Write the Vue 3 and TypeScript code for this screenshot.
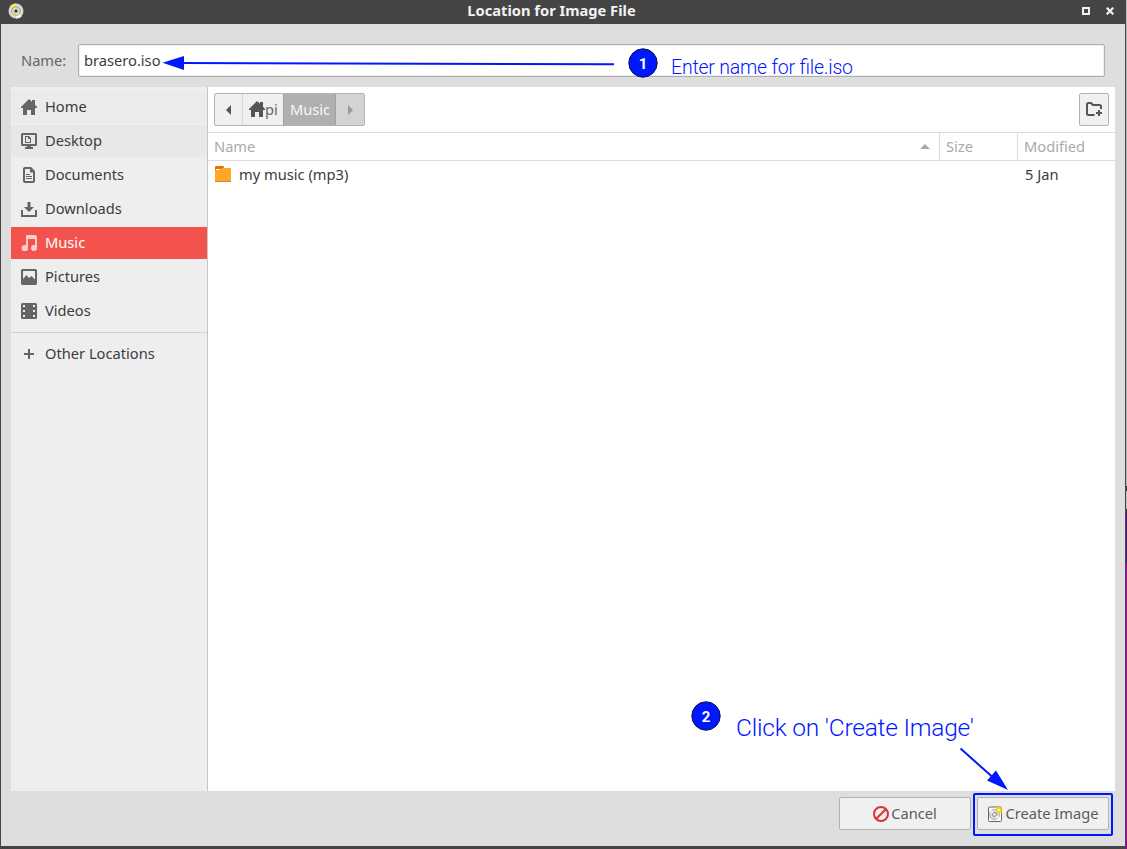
<script setup lang="ts">
interface Place {
  label: string
  icon: string
  state?: string
}

const places: Place[] = [
  { label: 'Home', icon: 'home', state: 'fade' },
  { label: 'Desktop', icon: 'desktop', state: 'hover' },
  { label: 'Documents', icon: 'documents' },
  { label: 'Downloads', icon: 'downloads' },
  { label: 'Music', icon: 'music', state: 'selected' },
  { label: 'Pictures', icon: 'pictures' },
  { label: 'Videos', icon: 'videos' },
]

const iconPaths: Record<string, string> = {
  home: 'M8 0 11 2.8V1h3v4.7L16 8v1h-2v7h-4v-5H6v5H2V9H0V8Z',
  desktop:
    'M1.500 0h13Q16 0 16 1.500v10q0 1.500-1.500 1.500H10v1h2v2H4v-2h2v-1H1.500Q0 13 0 11.500v-10Q0 0 1.500 0ZM2 2v9h12V2ZM4 3h4l2 2v5H4ZM5 4v5h4V6H7V4Z',
  documents:
    'M4 0h6l4 4v10q0 2-2 2H4q-2 0-2-2V2q0-2 2-2ZM4 2v12h8V5.500H9V2ZM5 7h4v1H5ZM5 9h6v1H5ZM5 11h6v1H5Z',
  downloads: 'M6.500 1h3v5H13l-5 5-5-5h3.500ZM0 9h2v5h12V9h2v7H0Z',
  music:
    'M6 0h8q2 0 2 2v11a3 3 0 1 1-3-3h1V4H7v9a3.200 3.200 0 1 1-3-3h1V1q0-1 1-1Z',
  pictures:
    'M1.500 0h13Q16 0 16 1.500v13q0 1.500-1.500 1.500h-13Q0 16 0 14.500v-13Q0 0 1.500 0ZM2 2v8l3.500-4L8 9l2.500-2L14 10.500V2Z',
  videos:
    'M1.500 0h13Q16 0 16 1.500v13q0 1.500-1.500 1.500h-13Q0 16 0 14.500v-13Q0 0 1.500 0ZM2 2v2h2V2ZM2 7v2h2V7ZM2 12v2h2v-2ZM12 2v2h2V2ZM12 7v2h2V7ZM12 12v2h2v-2Z',
}
</script>

<template>
  <div class="screen">
    <div class="window">
      <header class="titlebar">
        <svg class="disc" width="16" height="16" viewBox="0 0 16 16">
          <circle cx="8" cy="8" r="7.500" fill="#d8d8d8" />
          <path d="M8 8 2 3A8 8 0 0 1 8 .5Z" fill="#f4e66b" />
          <path d="m8 8 6 5a7.500 7.500 0 0 1-6 2.500Z" fill="#f5f5f0" />
          <circle cx="8" cy="8" r="4.300" fill="none" stroke="#a5a184" />
          <path d="M4.500 8.500a3.500 3.500 0 0 0 6 2.300" fill="none" stroke="#ded35d" stroke-width="1.300" />
          <circle cx="8" cy="8" r="2.500" fill="#ccc" />
          <circle cx="8" cy="8" r="1.500" fill="#333" />
        </svg>
        <h1>Location for Image File</h1>
        <div class="controls">
          <svg width="8" height="8" viewBox="0 0 8 8"><path d="M1 1h6v6H1Z" fill="none" stroke="#f2f2f2" stroke-width="2" /></svg>
          <svg width="8" height="8" viewBox="0 0 8 8"><path d="m.7.7 6.600 6.600m0-6.600L.7 7.300" stroke="#f2f2f2" stroke-width="2.200" /></svg>
        </div>
      </header>

      <div class="name-row">
        <span class="name-label">Name:</span>
        <div class="entry">brasero.iso</div>
      </div>

      <div class="browser">
        <nav class="sidebar">
          <div v-for="place in places" :key="place.label" class="place" :class="place.state">
            <svg width="16" height="16" viewBox="0 0 16 16"><path :d="iconPaths[place.icon]" fill="currentColor" fill-rule="evenodd" /></svg>
            <span>{{ place.label }}</span>
          </div>
          <div class="separator"></div>
          <div class="place">
            <svg width="16" height="16" viewBox="0 0 16 16"><path d="M7 3h2v4h4v2H9v4H7V9H3V7h4Z" fill="currentColor" /></svg>
            <span>Other Locations</span>
          </div>
        </nav>

        <main class="files">
          <div class="toolbar">
            <div class="pathbar">
              <div class="crumb back"><svg width="5" height="10" viewBox="0 0 5 10"><path d="M5 0v10L0 5Z" fill="#555" /></svg></div>
              <div class="crumb home">
                <svg width="16" height="16" viewBox="0 0 16 16"><path :d="iconPaths.home" fill="#555" /></svg><span>pi</span>
              </div>
              <div class="crumb current"><span>Music</span></div>
              <div class="crumb forward"><svg width="5" height="10" viewBox="0 0 5 10"><path d="M0 0v10l5-5Z" fill="#999" /></svg></div>
            </div>
            <div class="new-folder">
              <svg width="17" height="16" viewBox="0 0 17 16">
                <path d="M8.500 13H2.500Q1 13 1 11.500V2.500Q1 1 2.500 1H5l2 2h6.500Q15 3 15 4.500V7" fill="none" stroke="#555" stroke-width="2" />
                <path d="M12 8h2v2h2v2h-2v2h-2v-2h-2v-2h2Z" fill="#555" />
              </svg>
            </div>
          </div>
          <div class="columns head">
            <div class="col name"><span>Name</span><svg width="10" height="5" viewBox="0 0 10 5"><path d="M5 0l5 5H0Z" fill="#aaa" /></svg></div>
            <div class="col"><span>Size</span></div>
            <div class="col"><span>Modified</span></div>
          </div>
          <div class="columns file">
            <div class="col name">
              <svg width="16" height="16" viewBox="0 0 16 16">
                <path d="M0 1q0-1 1-1h7l2 2h5q1 0 1 1v2H0Z" fill="#ef6c00" />
                <path d="M9 0h7v2H9Z" fill="#fff" />
                <path d="M1 3h5L5 4H1Z" fill="#fff" />
                <path d="M0 4h5l2-2h9v14H0Z" fill="#ffa726" />
                <path d="M0 15h16v1H0Z" fill="#d58b20" />
              </svg>
              <span>my music (mp3)</span>
            </div>
            <div class="col"></div>
            <div class="col date">5 Jan</div>
          </div>
        </main>
      </div>

      <footer class="actions">
        <button>
          <svg width="16" height="16" viewBox="0 0 16 16"><circle cx="8" cy="8" r="7" fill="none" stroke="#dc3434" stroke-width="2" /><path d="M3.200 12.800 12.800 3.200" stroke="#dc3434" stroke-width="2" /></svg>
          <span>Cancel</span>
        </button>
        <button>
          <svg width="16" height="16" viewBox="0 0 16 16">
            <rect x="1.500" y="1" width="13" height="14.500" rx="1" fill="#f8f8f8" stroke="#666" />
            <circle cx="7.500" cy="8.500" r="5" fill="#d8d8d8" stroke="#999" stroke-width=".7" />
            <path d="m4 5 7 7" stroke="#fff" stroke-width="2" />
            <circle cx="7.500" cy="8.500" r="2" fill="#eee" stroke="#888" />
            <path d="m12 0 1 1.500L15 1l-.5 2L16 4l-1.500 1 .5 2-2-.5L12 8l-1-1.500L9 7l.5-2L8 4l1.500-1L9 1l2 .5Z" fill="#ead51a" />
            <circle cx="12" cy="4" r="1.300" fill="#fff8b0" />
          </svg>
          <span>Create Image</span>
        </button>
      </footer>
    </div>
    <div class="desktop-edge"></div>

    <svg class="notes" width="1127" height="849" viewBox="0 0 1127 849">
      <path d="M183 63 614 64.200" stroke="#0018ff" stroke-width="2" />
      <path d="M162.500 62.700 184 56v14Z" fill="#0018ff" />
      <circle cx="643" cy="63" r="14.200" fill="#0018ff" stroke="#10104a" />
      <text class="badge" x="643" y="69" text-anchor="middle">1</text>
      <text class="note" x="671" y="73.500" font-size="19.500" textLength="182">Enter name for file.iso</text>
      <circle cx="706" cy="716" r="14.200" fill="#0018ff" stroke="#10104a" />
      <text class="badge" x="706" y="722" text-anchor="middle">2</text>
      <text class="note" x="736" y="736" font-size="24.500" textLength="238">Click on 'Create Image'</text>
      <path d="m960.500 748.500 32 28.500" stroke="#0018ff" stroke-width="2" />
      <path d="M1008 790 987 780.500 996 770.500Z" fill="#0018ff" />
      <rect x="974" y="794" width="138" height="41" rx="1" fill="none" stroke="#0018ff" stroke-width="2" />
    </svg>
  </div>
</template>

<style>
body {
  margin: 0;
  overflow: hidden;
}
</style>

<style scoped>
* {
  box-sizing: border-box;
}
svg {
  display: block;
  flex: none;
}
.screen {
  position: relative;
  display: flex;
  width: 1127px;
  height: 849px;
  font: 14.667px/20px 'Noto Sans', sans-serif;
  color: #3c3c3c;
}
.window {
  display: flex;
  flex-direction: column;
  width: 1126px;
  background: #dedede;
  border: solid #454545;
  border-width: 0 1px 3px;
}
.desktop-edge {
  width: 1px;
  background: linear-gradient(#b8b8b8 0 486px, #333 486px 491px, #bbb 491px 509px, #333 509px 513px, #4d1671 513px 563px, #a50091 563px);
}
.titlebar {
  display: flex;
  align-items: center;
  height: 24px;
  flex: none;
  padding: 0 11px 2px 7px;
  background: #454545;
  color: #f2f2f2;
}
h1 {
  flex: 1;
  margin: 0 0 0 -3px;
  padding-bottom: 2px;
  font-size: 14.667px;
  line-height: 20px;
  font-weight: 700;
  text-align: center;
}
.controls {
  display: flex;
  gap: 16px;
}
.name-row {
  display: flex;
  align-items: center;
  flex: none;
  height: 63px;
  padding: 10px 20px 0;
}
.name-label {
  width: 57px;
  padding-bottom: 2px;
  color: #666;
}
.entry {
  flex: 1;
  height: 33px;
  padding: 5px;
  background: #fff;
  border: 1px solid #afafaf;
  border-radius: 2px;
  box-shadow: inset 0 0 0 1px #eee;
}
.browser {
  display: flex;
  flex: none;
  height: 704px;
  margin: 0 10px;
}
.sidebar {
  display: flex;
  flex-direction: column;
  gap: 2px;
  width: 197px;
  padding-top: 4px;
  background: #eee;
  border-right: 1px solid #c6c6c6;
}
.place {
  display: flex;
  align-items: center;
  gap: 8px;
  height: 32px;
  padding-left: 10px;
}
.place span,
.crumb span,
.head span,
button span {
  padding-bottom: 2px;
}
.place svg {
  color: #656565;
}
.fade {
  background: #ebebeb;
}
.hover {
  background: #e8e8e8;
}
.selected {
  background: #f2544d;
  color: #fff;
}
.selected svg {
  color: #ffcbc9;
}
.separator {
  height: 1px;
  margin: 3px 0;
  background: #d2d2d2;
}
.files {
  flex: 1;
  background: #fff;
}
.toolbar {
  display: flex;
  justify-content: space-between;
  height: 45px;
  padding: 6px 6px 0;
}
.pathbar {
  display: flex;
  width: 151px;
  height: 33px;
  border: 1px solid #b2b2b2;
  border-radius: 2px;
  background: #f0f0f0;
  color: #666;
}
.crumb {
  display: flex;
  align-items: center;
  justify-content: center;
}
.back {
  width: 28px;
  border-right: 1px solid #d7d7d7;
}
.home {
  width: 40px;
  padding-left: 1px;
}
.home svg {
  margin-bottom: 1px;
}
.current {
  width: 53px;
  padding-left: 1px;
  background: #b0b0b0;
  border: solid #a0a0a0;
  border-width: 0 1px;
  color: #f8f8f8;
}
.forward {
  flex: 1;
  background: #d3d3d3;
}
.new-folder {
  display: flex;
  align-items: center;
  justify-content: center;
  width: 30px;
  height: 33px;
  border: 1px solid #b2b2b2;
  border-radius: 2px;
  background: #f0f0f0;
}
.columns {
  display: grid;
  grid-template-columns: 732px 78px 1fr;
  height: 26px;
}
.head {
  height: 29px;
  border: solid #dcdcdc;
  border-width: 1px 0;
  color: #aaa;
}
.col {
  display: flex;
  align-items: center;
  padding: 0 6px;
}
.head .col + .col,
.head .name {
  border-right: 1px solid #dcdcdc;
}
.head .col:last-child {
  border-right: 0;
}
.head .name {
  justify-content: space-between;
  padding-right: 9px;
}
.file .name {
  gap: 8px;
  padding-left: 7px;
}
.file .date {
  padding-left: 7px;
}
.actions {
  display: flex;
  gap: 6px;
  justify-content: flex-end;
  padding: 6px 16px 0 0;
}
button {
  display: flex;
  align-items: center;
  justify-content: center;
  gap: 2px;
  width: 132px;
  height: 33px;
  padding: 0;
  border: 1px solid #b2b2b2;
  border-radius: 2px;
  background: #f0f0f0;
  color: #5c5c5c;
  font: inherit;
}
.notes {
  position: absolute;
  inset: 0;
  font-family: Roboto, sans-serif;
}
.note {
  fill: #0018ff;
  font-weight: 300;
}
.badge {
  fill: #fff;
  font-size: 15px;
  font-weight: 700;
}
</style>
